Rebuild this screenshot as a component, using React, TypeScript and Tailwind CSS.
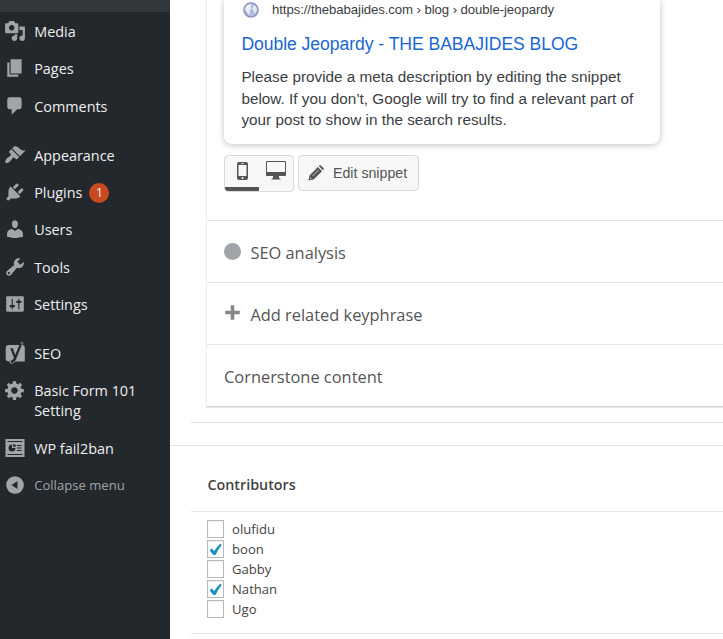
import type { ReactNode } from "react";

const icons = {
  media:
    "M13 11V4c0-.55-.45-1-1-1h-1.67L9 1H5L3.67 3H2c-.55 0-1 .45-1 1v7c0 .55.45 1 1 1h10c.55 0 1-.45 1-1zM7 4.5c1.38 0 2.5 1.12 2.5 2.5S8.38 9.5 7 9.5 4.5 8.38 4.5 7 5.62 4.5 7 4.5zM14 6h5v10.5c0 1.38-1.12 2.5-2.5 2.5S14 17.88 14 16.5s1.12-2.5 2.5-2.5c.17 0 .34.02.5.05V9h-3V6zm-4 8.05V13h2v3.5c0 1.38-1.12 2.5-2.5 2.5S7 17.88 7 16.5 8.12 14 9.5 14c.17 0 .34.02.5.05z",
  pages: "M6 15V2h10v13H6zm-1 1h8v2H3V5h2v11z",
  comments: "M5 2h9c1.1 0 2 .9 2 2v7c0 1.1-.9 2-2 2h-2l-5 5v-5H5c-1.1 0-2-.9-2-2V4c0-1.1.9-2 2-2z",
  appearance:
    "M14.48 11.06L7.41 3.99l1.5-1.5c.5-.56 2.3-.47 3.51.32 1.21.8 1.43 1.28 2.91 2.1 1.18.64 2.45 1.26 4.45.85zm-.71.71L6.7 4.7 4.93 6.47c-.39.39-.39 1.02 0 1.41l1.06 1.06c.39.39.39 1.03 0 1.42-.6.6-1.43 1.11-2.21 1.69-.35.26-.7.53-1.01.84C1.43 14.23.4 16.08 1.4 17.07c.99 1 2.84-.03 4.18-1.36.31-.31.58-.66.85-1.02.57-.78 1.08-1.61 1.69-2.21.39-.39 1.02-.39 1.41 0l1.06 1.06c.39.39 1.02.39 1.41 0z",
  plugins:
    "M13.11 4.36L9.87 7.6 8 5.73l3.24-3.24c.35-.34 1.05-.2 1.56.32.52.51.66 1.21.31 1.55zm-8 1.77l.91-1.12 9.01 9.01-1.19.84c-.71.71-2.63 1.16-3.82 1.16H6.14L4.9 17.26c-.59.59-1.54.59-2.12 0-.59-.58-.59-1.53 0-2.12l1.24-1.24v-3.88c0-1.13.4-3.19 1.09-3.89zm7.26 3.97l3.24-3.24c.34-.35 1.04-.21 1.55.31.52.51.66 1.21.31 1.55l-3.24 3.25z",
  users:
    "M10 9.25c-2.27 0-2.73-3.44-2.73-3.44C7 4.02 7.82 2 9.97 2c2.16 0 2.98 2.02 2.71 3.81 0 0-.41 3.44-2.68 3.44zm0 2.57L12.72 10c2.39 0 4.52 2.33 4.52 4.53v2.49s-3.65 1.13-7.24 1.13c-3.65 0-7.24-1.13-7.24-1.13v-2.49c0-2.25 1.94-4.48 4.47-4.48z",
  tools:
    "M16.68 9.77c-1.34 1.34-3.3 1.67-4.95.99l-5.41 6.52c-.99.99-2.59.99-3.58 0s-.99-2.59 0-3.57l6.52-5.42c-.68-1.65-.35-3.61.99-4.95 1.28-1.28 3.12-1.62 4.72-1.06l-2.89 2.89 2.82 2.82 2.86-2.87c.53 1.58.18 3.39-1.08 4.65zM3.81 16.21c.4.39 1.04.39 1.43 0 .4-.4.4-1.04 0-1.43-.39-.4-1.03-.4-1.43 0-.39.39-.39 1.03 0 1.43z",
  settings:
    "M18 16V4c0-.55-.45-1-1-1H3c-.55 0-1 .45-1 1v12c0 .55.45 1 1 1h14c.55 0 1-.45 1-1zM8 11h1c.55 0 1 .45 1 1s-.45 1-1 1H8v1.5c0 .28-.22.5-.5.5s-.5-.22-.5-.5V13H6c-.55 0-1-.45-1-1s.45-1 1-1h1V5.5c0-.28.22-.5.5-.5s.5.22.5.5V11zm5-2h-1c-.55 0-1-.45-1-1s.45-1 1-1h1V5.5c0-.28.22-.5.5-.5s.5.22.5.5V7h1c.55 0 1 .45 1 1s-.45 1-1 1h-1v5.5c0 .28-.22.5-.5.5s-.5-.22-.5-.5V9z",
  generic:
    "M18 12h-2.18c-.17.7-.44 1.35-.81 1.93l1.54 1.54-2.1 2.1-1.54-1.54c-.58.36-1.23.63-1.91.79V19H8v-2.18c-.68-.16-1.33-.43-1.91-.79l-1.54 1.54-2.12-2.12 1.54-1.54c-.36-.58-.63-1.23-.79-1.91H1V9.03h2.17c.16-.7.44-1.35.8-1.94L2.43 5.55l2.1-2.1 1.54 1.54c.58-.37 1.24-.64 1.93-.81V2h3v2.18c.68.16 1.33.43 1.91.79l1.54-1.54 2.12 2.12-1.54 1.54c.36.59.64 1.24.8 1.94H18V12zm-8.5 1.5c1.66 0 3-1.34 3-3s-1.34-3-3-3-3 1.34-3 3 1.34 3 3 3z",
};

function Icon({ d }: { d: string }) {
  return (
    <svg className="size-[22px] fill-[#a0a5aa]" viewBox="0 0 20 20">
      <path fillRule="evenodd" d={d} />
    </svg>
  );
}

function SeoIcon() {
  return (
    <svg className="size-[22px]" viewBox="0 0 22 22">
      <path d="M4.500 3H18.500q2.300 0 2.300 2.500V19.500H4.500C2.900 19.500 1.700 18.300 1.700 16.700V5.800C1.700 4.200 2.900 3 4.500 3z" fill="#a0a5aa" />
      <path d="M16.300.8h2.700l-6.500 16.300c-1.100 2.700-2.700 4.100-6 4.300v-2.600c2.200-.4 3.200-1.700 3.300-3.300L6.300 6.300h2.500l2.400 6.800z" fill="#23282d" />
      <path d="M16.300.8h2.700l-6.500 16.300c-1.100 2.700-2.700 4.100-6 4.300v-2.600" fill="none" stroke="#a0a5aa" strokeWidth=".8" />
    </svg>
  );
}

function ReportIcon() {
  return (
    <svg className="size-[22px]" viewBox="0 0 22 22">
      <path d="M1.500 2h19v18h-19z" fill="#a0a5aa" />
      <path d="M3.500 4.500h15M3.500 17.500h15" stroke="#23282d" strokeWidth="1.200" />
      <path d="M8 7.500a3.500 3.500 0 1 0 3.500 3.500H8z" fill="#23282d" />
      <path d="M9.200 7v2.800h2.800A2.900 2.900 0 0 0 9.200 7z" fill="#23282d" />
      <path d="M13 8.500H17.500M13 11H17.500M13 13.500H17.500" stroke="#23282d" strokeWidth="1.200" />
    </svg>
  );
}

function MenuItem({ icon, label, className = "text-[14.400px]", children }: { icon: ReactNode; label: ReactNode; className?: string; children?: ReactNode }) {
  return (
    <li className="flex items-start pl-[3.500px]">
      <span className="mt-[7.700px] shrink-0">{icon}</span>
      <span className={`ml-[8.700px] pt-[9.700px] pb-[7.700px] leading-5 whitespace-nowrap ${className}`}>{label}</span>
      {children}
    </li>
  );
}

function Sidebar() {
  return (
    <nav className="w-[170px] shrink-0 bg-[#23282d] text-[#eee]">
      <div className="h-3 bg-[#32373c]" />
      <ul className="pt-[0.3px]">
        <MenuItem icon={<Icon d={icons.media} />} label="Media" />
        <MenuItem icon={<Icon d={icons.pages} />} label="Pages" />
        <MenuItem icon={<Icon d={icons.comments} />} label="Comments" />
        <li className="h-[11.600px]" />
        <MenuItem icon={<Icon d={icons.appearance} />} label="Appearance" />
        <MenuItem icon={<Icon d={icons.plugins} />} label="Plugins">
          <span className="mt-[10px] ml-[7px] flex size-5 items-center justify-center rounded-full bg-[#ca4a1f] text-[12px] text-white">1</span>
        </MenuItem>
        <MenuItem icon={<Icon d={icons.users} />} label="Users" />
        <MenuItem icon={<Icon d={icons.tools} />} label="Tools" />
        <MenuItem icon={<Icon d={icons.settings} />} label="Settings" />
        <li className="h-[11.400px]" />
        <MenuItem icon={<SeoIcon />} label="SEO" />
        <MenuItem icon={<Icon d={icons.generic} />} label={<>Basic Form 101<br />Setting</>} />
        <MenuItem icon={<ReportIcon />} label="WP fail2ban" />
        <MenuItem
          className="mt-[-1px] text-[13.100px] text-[#a0a5aa]"
          icon={
            <svg className="size-[22px]" viewBox="0 0 22 22">
              <circle cx="11" cy="11" r="8.800" fill="#a0a5aa" />
              <path d="M13.500 7v8l-6-4z" fill="#23282d" />
            </svg>
          }
          label="Collapse menu"
        />
      </ul>
    </nav>
  );
}

function GlobeIcon() {
  return (
    <svg className="size-4" viewBox="0 0 16 16">
      <circle cx="8" cy="8" r="7.100" fill="#b3bbda" stroke="#8790bb" strokeWidth="1.400" />
      <path d="M3 4.500Q5.500 1.500 8.500 2.500L7.500 5 8.500 6.500 6.500 8.500 7 11.500 5.500 12.500Q4.500 9.500 2.300 8z" fill="#eef1fa" />
      <path d="M10 4l2-.5Q14 5.500 13.700 9l-2 2.500L10.500 9 9.500 7.500z" fill="#e4e8f6" />
    </svg>
  );
}

function SnippetCard() {
  return (
    <div className="ml-[17px] h-36 w-[436px] rounded-b-lg bg-white pl-[17.400px] font-['Liberation_Sans',Arial,sans-serif] text-[#3c4043] shadow-[0_1px_6px_rgba(32,33,36,0.28)]">
      <div className="flex h-[19px] items-center gap-[13px] pl-[1.600px]">
        <GlobeIcon />
        <span className="text-[13.200px] leading-5 tracking-[-0.08px] whitespace-nowrap">https://thebabajides.com › blog › double-jeopardy</span>
      </div>
      <div className="mt-[13px] text-[17.600px] leading-6 tracking-[-0.060px] whitespace-nowrap text-[#1967d2]">Double Jeopardy - THE BABAJIDES BLOG</div>
      <p className="mt-[10px] text-[15.300px] leading-[21.600px] whitespace-nowrap">
        Please provide a meta description by editing the snippet
        <br />
        below. If you don’t, Google will try to find a relevant part of
        <br />
        your post to show in the search results.
      </p>
    </div>
  );
}

function PreviewControls() {
  return (
    <div className="mt-[11px] ml-[17px] flex gap-1">
      <div className="flex h-[37px] w-[70px] overflow-hidden rounded-[4px] border border-[#dadada] bg-[#f7f7f7]">
        <div className="flex w-[34px] justify-center border-b-4 border-[#555] pt-[6px]">
          <svg className="h-[18px] w-[11px]" viewBox="0 0 11 18">
            <rect width="11" height="18" rx="2" fill="#555" />
            <path d="M1.500 3h8v11h-8z" fill="#f7f7f7" />
            <path d="M4 1.500h3" stroke="#ccc" />
            <circle cx="5.500" cy="16" r="1" fill="#f7f7f7" />
          </svg>
        </div>
        <div className="flex flex-1 justify-center pt-[5px]">
          <svg className="h-[19px] w-5" viewBox="0 0 20 19">
            <path d="M1 0h18q1 0 1 1v13q0 1-1 1h-6v2l1.500 1v.5h-9V18L7 17v-2H1q-1 0-1-1V1q0-1 1-1z" fill="#555" />
            <path d="M1 1h18v10H1z" fill="#f7f7f7" />
          </svg>
        </div>
      </div>
      <button className="flex h-9 w-[121px] items-center rounded-[4px] border border-[#dadada] bg-[#f7f7f7] pl-[9px] font-['Liberation_Sans',Arial,sans-serif] text-[14.200px] text-[#555]">
        <svg className="mr-[9px] size-4" viewBox="0 0 16 16" fill="#555">
          <path d="M9.800 1.900l4.300 4.300-8.600 8.300L.4 15.600l1.100-5.200zM10.700 1l.7-.6q.7-.6 1.400 0l2.700 2.700q.6.700 0 1.400l-.6.700z" />
          <path d="M4.500 11l6-6" stroke="#f7f7f7" strokeWidth=".7" />
          <path d="M1.800 12.700l1.500 1.500" stroke="#f7f7f7" />
        </svg>
        <span className="pt-[2px]">Edit snippet</span>
      </button>
    </div>
  );
}

function Section({ children }: { children: ReactNode }) {
  return <div className="flex h-[62px] items-center border-t border-[#e2e4e7] pt-[3px] pl-[17px] text-[16.400px] text-[#555]">{children}</div>;
}

function Contributor({ name, checked }: { name: string; checked?: boolean }) {
  return (
    <label className="flex h-5 items-center">
      <span className="flex h-[18px] w-[17px] items-center justify-center border border-[#b4b9be] bg-white shadow-[inset_0_1px_2px_rgba(0,0,0,0.07)]">
        {checked && (
          <svg className="size-[13px]" viewBox="0 0 13 13">
            <path d="M.500 7.200L3 5.500l2.200 2.700Q8 3.500 11.300.8l1.500 1.200Q9 6.500 6.500 12H4.500z" fill="#1e8cbe" />
          </svg>
        )}
      </span>
      <span className="ml-[8px] text-[13.100px] leading-5">{name}</span>
    </label>
  );
}

export default function App() {
  return (
    <div className="flex h-[639px] w-[723px] overflow-hidden bg-white font-['Open_Sans','Noto_Sans',sans-serif]">
      <Sidebar />
      <main className="flex min-w-0 flex-1 flex-col">
        <div className="ml-[21px] h-[423px] border-b border-[#dcdfe3]">
          <div className="ml-[15px] h-[407px] border-b border-l border-b-[#d5d7da] border-l-[#eceef0] shadow-[0_1px_1px_rgba(0,0,0,0.1)]">
            <div className="h-[220px]">
              <SnippetCard />
              <PreviewControls />
            </div>
            <Section>
              <span className="mt-[-4px] mr-[9.400px] size-[17px] rounded-full bg-[#a0a5aa]" />
              SEO analysis
            </Section>
            <Section>
              <svg className="mt-[-5px] mr-[10.400px] ml-[1px] size-[15px]" viewBox="0 0 15 15">
                <path d="M7.500 2v11M2 7.500h11" stroke="#888" strokeWidth="3.600" strokeLinecap="square" />
              </svg>
              Add related keyphrase
            </Section>
            <Section>Cornerstone content</Section>
          </div>
        </div>
        <div className="mt-[22px] border-t border-[#e2e4e7]" />
        <section className="ml-[21px] h-[188px] border-b border-[#e2e4e7] text-[#444]">
          <h2 className="flex h-[66px] items-center border-b border-[#e2e4e7] pt-[12px] pl-[16.500px] text-[14.300px] font-semibold text-[#444]">Contributors</h2>
          <div className="pt-[7px] pl-4">
            <Contributor name="olufidu" />
            <Contributor name="boon" checked />
            <Contributor name="Gabby" />
            <Contributor name="Nathan" checked />
            <Contributor name="Ugo" />
          </div>
        </section>
      </main>
    </div>
  );
}
